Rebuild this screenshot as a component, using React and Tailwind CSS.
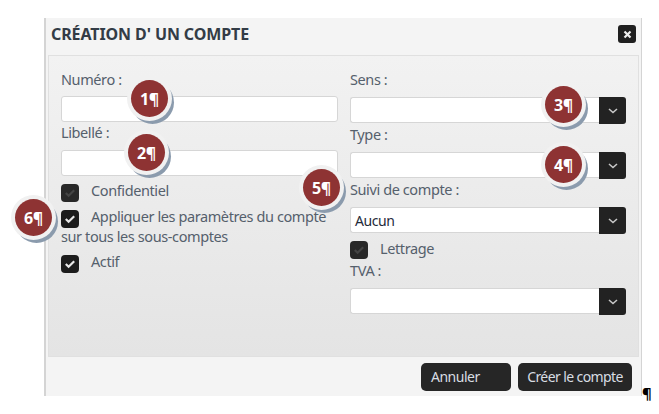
import React from "react";

function Marker({ n, className }) {
  return (
    <div className={"absolute w-[37px] h-[37px] rounded-full bg-[#8e3333] shadow-[0_0_0_4px_#f1f1f1,3px_4px_0_3px_#8b9bad] flex items-center justify-center text-white font-bold text-[16px] leading-none tracking-[-0.3px] font-['Open_Sans',sans-serif] " + className}>
      {n}¶
    </div>
  );
}

function Check({ dim }) {
  return (
    <span className={"shrink-0 w-[18px] h-[18px] rounded-[4px] flex items-center justify-center " + (dim ? "bg-[#282828]" : "bg-[#1c1c1c]")}>
      <svg width="12" height="10" viewBox="0 0 12 10" fill="none">
        <path d="M1.8 5 L4.6 7.8 L10.2 2.2" stroke={dim ? "#444444" : "#e8e8e8"} strokeWidth="2.2" />
      </svg>
    </span>
  );
}

function Field({ value, className = "" }) {
  return (
    <div className={"h-[26px] bg-white border border-[#d6d6d6] rounded-[3px] flex items-center px-1 text-[14px] text-[#1f2a3a] " + className}>
      {value}
    </div>
  );
}

function Select({ value }) {
  return (
    <div className="flex h-[27px]">
      <Field value={value} className="flex-1 rounded-r-none border-r-0" />
      <span className="w-[27px] h-[27px] bg-[#222222] rounded-r-[3px] flex items-center justify-center">
        <svg width="10" height="6" viewBox="0 0 10 6" fill="none">
          <path d="M1 1 L5 4.5 L9 1" stroke="#c8c8c8" strokeWidth="1.6" />
        </svg>
      </span>
    </div>
  );
}

function Label({ children, className = "" }) {
  return <div className={"text-[14.5px] leading-[16px] text-[#55606c] " + className}>{children}</div>;
}

export default function App() {
  return (
    <div className="relative w-[659px] h-[414px] bg-white font-['Noto_Sans',sans-serif] tracking-[-0.4px]">
      <div className="pt-[18px] pl-[44px]">
        <div className="w-[598px] h-[378px] bg-[#f4f4f4] border-l-2 border-r border-[#d4d4d4] flex flex-col">
          <div className="h-[37px] flex items-start justify-between pl-[5px] pr-[5px] pt-[7px]">
            <div className="text-[16px] leading-[18px] font-bold text-[#333c46] tracking-[-0.1px]">CRÉATION D' UN COMPTE</div>
            <span className="w-[18px] h-[18px] bg-[#1f1f1f] rounded-[3px] flex items-center justify-center">
              <svg width="9" height="9" viewBox="0 0 9 9" fill="none">
                <path d="M1.5 1.5 L7.5 7.5 M7.5 1.5 L1.5 7.5" stroke="#eeeeee" strokeWidth="2.2" />
              </svg>
            </span>
          </div>
          <div className="h-[302px] mx-[2px] bg-gradient-to-b from-[#f2f2f2] to-[#e4e4e4] border border-[#e0e0e0] pl-[12px] pr-[12px] flex gap-[12px]">
            <div className="w-[277px] flex flex-col pt-[15px]">
              <Label className="h-[25px]">Numéro :</Label>
              <Field />
              <Label className="h-[28px] pt-[2px]">Libellé :</Label>
              <Field />
              <div className="flex items-start gap-[12px] mt-[8px] text-[14.5px] leading-[12px] text-[#55606c]">
                <Check dim />
                <span>Confidentiel</span>
              </div>
              <div className="mt-[8px] text-[14.5px] text-[#55606c]">
                <div className="flex items-start gap-[12px] h-[18px] leading-[12px]">
                  <Check />
                  <span className="whitespace-nowrap">Appliquer les paramètres du compte</span>
                </div>
                <div className="h-[19px] leading-[16px]">sur tous les sous-comptes</div>
              </div>
              <div className="flex items-start gap-[12px] mt-[8px] text-[14.5px] leading-[12px] text-[#55606c]">
                <Check />
                <span>Actif</span>
              </div>
            </div>
            <div className="w-[276px] flex flex-col pt-[15px]">
              <Label className="h-[26px]">Sens :</Label>
              <Select />
              <Label className="h-[28px] pt-[2px]">Type :</Label>
              <Select />
              <Label className="h-[28px] pt-[2px]">Suivi de compte :</Label>
              <Select value="Aucun" />
              <div className="flex items-start gap-[12px] mt-[7px] text-[14.5px] leading-[14px] text-[#55606c]">
                <Check dim />
                <span>Lettrage</span>
              </div>
              <Label className="h-[29px] pt-[3px]">TVA :</Label>
              <Select />
            </div>
          </div>
          <div className="flex-1 flex justify-end items-start gap-[7px] pt-[6px] pr-[9px]">
            <div className="w-[90px] h-[28px] bg-[#262626] rounded-[5px] text-[#d8dde2] text-[14px] tracking-[-0.5px] leading-[27px] pl-[10px]">Annuler</div>
            <div className="w-[114px] h-[28px] bg-[#262626] rounded-[5px] text-[#d8dde2] text-[14px] tracking-[-0.6px] leading-[27px] text-center">Créer le compte</div>
          </div>
        </div>
      </div>
      <Marker n="1" className="left-[131px] top-[80px]" />
      <Marker n="2" className="left-[128px] top-[134px]" />
      <Marker n="3" className="left-[545px] top-[86px]" />
      <Marker n="4" className="left-[545px] top-[146px]" />
      <Marker n="5" className="left-[303px] top-[169px]" />
      <Marker n="6" className="left-[15px] top-[199px]" />
      <div className="absolute left-[642px] top-[384px] text-[15px] leading-[18px] text-black font-bold">¶</div>
    </div>
  );
}
